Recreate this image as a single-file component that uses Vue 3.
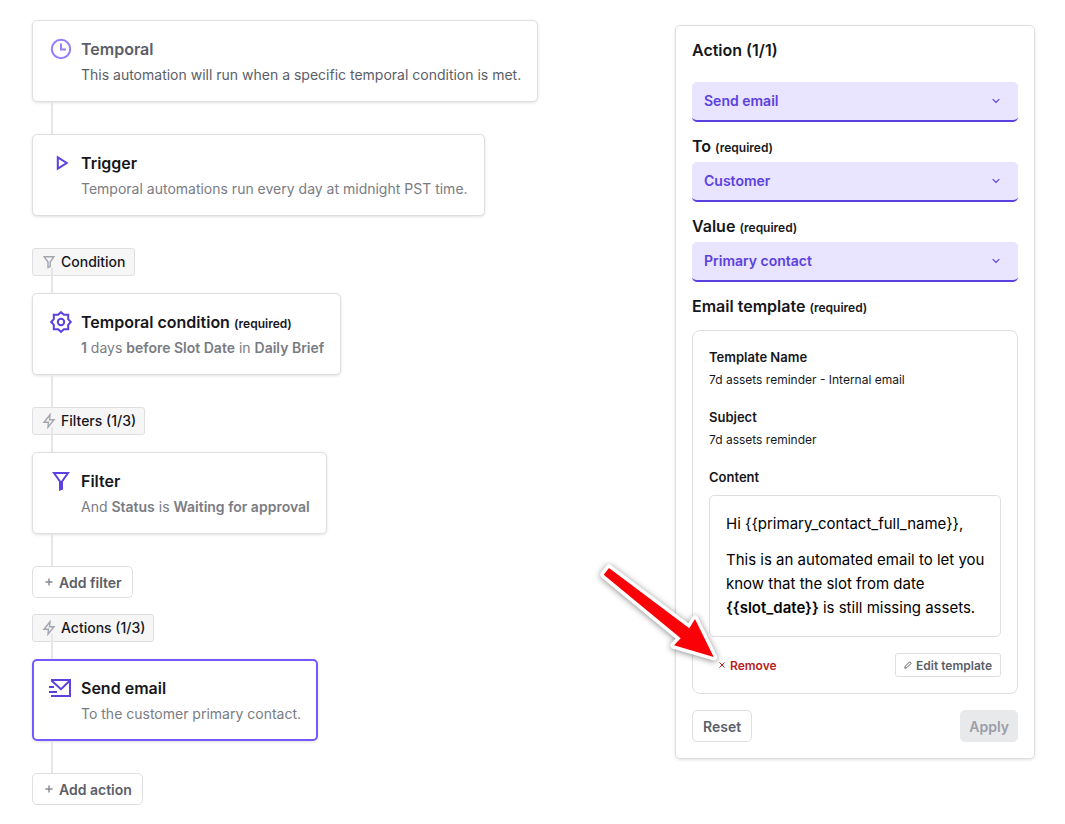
<script setup>
import { ref } from 'vue'

const action = ref('Send email')
const recipient = ref('Customer')
const value = ref('Primary contact')

const greeting = 'Hi {{primary_contact_full_name}},'
const dateVariable = '{{slot_date}}'
</script>

<template>
  <div class="page">
    <main class="flow">
      <section class="card intro">
        <svg class="icon light" viewBox="0 0 24 24"><circle cx="12" cy="12" r="9.2" /><path d="M12 6.6v6h5" /></svg>
        <div class="card-text">
          <h2>Temporal</h2>
          <p>This automation will run when a specific temporal condition is met.</p>
        </div>
      </section>
      <div class="line"></div>

      <section class="card">
        <svg class="icon" viewBox="0 0 24 24"><path d="M8.800 6.400v11.200l8.900-5.600z" /></svg>
        <div class="card-text">
          <h2>Trigger</h2>
          <p>Temporal automations run every day at midnight PST time.</p>
        </div>
      </section>

      <div class="pill spaced">
        <svg class="small-icon" viewBox="0 0 16 16"><path d="M3.2 2.8h9.6L9.2 8v4.6L7 13.5V8z" /></svg>
        <span>Condition</span>
      </div>
      <div class="line short"></div>

      <section class="card">
        <svg class="icon" viewBox="0 0 24 24">
          <path d="M12 2.2l2.9 2.6h4.3v4.3l2.6 2.9-2.6 2.9v4.3h-4.3L12 21.8l-2.9-2.6H4.8v-4.3L2.2 12l2.6-2.9V4.8h4.3z" />
          <circle cx="12" cy="12" r="3.2" />
        </svg>
        <div class="card-text">
          <h2>Temporal condition <small>(required)</small></h2>
          <p><b>1</b> days <b>before Slot Date</b> in <b>Daily Brief</b></p>
        </div>
      </section>
      <div class="line"></div>

      <div class="pill">
        <svg class="small-icon" viewBox="0 0 16 16"><path d="M9 1.8L3 9.2h4.4L7 14.2l6-7.4H8.5z" /></svg>
        <span>Filters (1/3)</span>
      </div>
      <div class="line short"></div>

      <section class="card">
        <svg class="icon" viewBox="0 0 24 24"><path d="M5 4h14l-6 8.5v7.2l-2 .8v-8z" /></svg>
        <div class="card-text">
          <h2>Filter</h2>
          <p>And <b>Status</b> is <b>Waiting for approval</b></p>
        </div>
      </section>
      <div class="line"></div>

      <button type="button" class="button">
        <svg class="plus" viewBox="0 0 12 12"><path d="M6 2.5v7M2.5 6h7" /></svg>
        Add filter
      </button>

      <div class="pill near">
        <svg class="small-icon" viewBox="0 0 16 16"><path d="M9 1.8L3 9.2h4.4L7 14.2l6-7.4H8.5z" /></svg>
        <span>Actions (1/3)</span>
      </div>
      <div class="line short"></div>

      <section class="card selected">
        <svg class="icon" viewBox="0 0 24 24">
          <path d="M2 4h19v16H2M2.5 4.500l9.500 8.700 9-8.700M0 11h5M0 16h8" />
        </svg>
        <div class="card-text">
          <h2>Send email</h2>
          <p>To the customer primary contact.</p>
        </div>
      </section>
      <div class="line"></div>

      <button type="button" class="button">
        <svg class="plus" viewBox="0 0 12 12"><path d="M6 2.5v7M2.5 6h7" /></svg>
        Add action
      </button>
    </main>

    <aside class="panel">
      <h2 id="action-title">Action (1/1)</h2>
      <div class="select first">
        <select v-model="action" aria-labelledby="action-title"><option>Send email</option></select>
        <svg viewBox="0 0 10 10"><path d="M1.700 3.200L5 6.500l3.300-3.300" /></svg>
      </div>

      <label for="recipient">To <small>(required)</small></label>
      <div class="select">
        <select id="recipient" v-model="recipient"><option>Customer</option></select>
        <svg viewBox="0 0 10 10"><path d="M1.700 3.200L5 6.500l3.300-3.300" /></svg>
      </div>

      <label for="value">Value <small>(required)</small></label>
      <div class="select">
        <select id="value" v-model="value"><option>Primary contact</option></select>
        <svg viewBox="0 0 10 10"><path d="M1.700 3.200L5 6.500l3.300-3.300" /></svg>
      </div>

      <h2 class="template-title">Email template <small>(required)</small></h2>
      <section class="template">
        <h3>Template Name</h3>
        <p class="detail">7d assets reminder - Internal email</p>
        <h3>Subject</h3>
        <p class="detail">7d assets reminder</p>
        <h3>Content</h3>
        <div class="content">
          <p>{{ greeting }}</p>
          <p>
            This is an automated email to let you<br />
            know that the slot from date<br />
            <b>{{ dateVariable }}</b> is still missing assets.
          </p>
        </div>
        <div class="row">
          <button type="button" class="mini remove">
            <svg viewBox="0 0 8 8"><path d="M1.500 1.500l5 5M6.500 1.500l-5 5" /></svg>
            Remove
            <svg class="arrow" viewBox="0 0 130 110" aria-hidden="true">
              <path d="M15 10l-5.3 6.700 77 63.600-6.700 7 39.700 11.700-18.700-38-5.700 9.300z" />
              <path class="fill" d="M15 10l-5.3 6.700 77 63.600-6.700 7 39.700 11.700-18.700-38-5.700 9.300z" />
            </svg>
          </button>
          <button type="button" class="mini">
            <svg viewBox="0 0 8 8"><path d="M.8 7.200l.5-2L5.700.8l1.500 1.500-4.400 4.400z" /></svg>
            Edit template
          </button>
        </div>
      </section>

      <div class="row">
        <button type="button" class="button">Reset</button>
        <button type="button" class="button" disabled>Apply</button>
      </div>
    </aside>
  </div>
</template>

<style>
body {
  background: #fff;
}
</style>

<style scoped>
.page {
  box-sizing: border-box;
  display: flex;
  align-items: flex-start;
  justify-content: space-between;
  gap: 32px;
  padding: 20px 30px 18px 32px;
  color: #16171c;
  font-family: Inter, "Liberation Sans", sans-serif;
  font-size: 14px;
  line-height: 20px;
}
h2,
h3,
p {
  margin: 0;
}
h2,
label {
  display: block;
  font-size: 16px;
  font-weight: 600;
  line-height: 24px;
}
small {
  font-size: 12px;
  line-height: 12px;
}
b {
  font-weight: 600;
}
svg {
  display: block;
  flex: none;
  fill: none;
  stroke: currentColor;
}
.flow {
  display: flex;
  flex-direction: column;
  align-items: flex-start;
}
.card {
  display: flex;
  gap: 8px;
  padding: 16px;
  border: 1px solid #dedfe2;
  border-radius: 5px;
  background: #fff;
  box-shadow: 0 1px 3px rgba(20, 20, 30, 0.12);
}
.card p {
  margin-top: 4px;
  color: #7a7c83;
}
.intro h2,
.intro p {
  color: #5b5e68;
}
.selected {
  padding: 15px;
  border: 2px solid #7559ff;
}
.icon {
  width: 24px;
  height: 24px;
  color: #5b41e0;
  stroke-width: 2;
}
.light {
  color: #917fff;
}
.line {
  width: 2px;
  height: 32px;
  margin-left: 19px;
  background: #e6e6e8;
}
.short {
  position: relative;
  height: 25px;
  margin-top: -8px;
}
.pill {
  display: flex;
  align-items: center;
  gap: 4px;
  padding: 3px 8px;
  border: 1px solid #dedfe2;
  border-radius: 3px;
  background: #f6f6f7;
  font-weight: 500;
}
.spaced {
  margin-top: 32px;
}
.near {
  margin-top: 16px;
}
.small-icon {
  width: 16px;
  height: 16px;
  color: #a3a5ae;
  stroke-width: 1.4;
}
button {
  font-family: inherit;
  cursor: pointer;
}
.button {
  display: flex;
  align-items: center;
  gap: 4px;
  height: 32px;
  padding: 0 10px;
  border: 1px solid #dedfe2;
  border-radius: 5px;
  background: #fff;
  color: #5b5e68;
  font-size: 14px;
  font-weight: 600;
}
.button:disabled {
  padding: 0 8px;
  border-color: #e8e9eb;
  background: #e8e9eb;
  color: #9b9ea8;
  cursor: default;
}
.plus {
  width: 12px;
  height: 12px;
  color: #858891;
  stroke-width: 1.4;
}
.panel {
  box-sizing: border-box;
  flex: none;
  width: 360px;
  margin-top: 5px;
  padding: 12px 16px 16px;
  border: 1px solid #dedfe2;
  border-radius: 5px;
  box-shadow: 0 1px 3px rgba(20, 20, 30, 0.12);
}
.select {
  display: grid;
  align-items: center;
  margin-bottom: 12px;
}
.first {
  margin-top: 20px;
}
label {
  margin-bottom: 4px;
}
.select > * {
  grid-area: 1 / 1;
}
select {
  box-sizing: border-box;
  width: 100%;
  height: 40px;
  padding: 0 12px;
  appearance: none;
  border: 0;
  border-bottom: 2px solid #5b41e0;
  border-radius: 5px;
  background: #e9e4ff;
  color: #5b41e0;
  font: inherit;
  font-weight: 600;
}
.select svg {
  justify-self: end;
  width: 10px;
  height: 10px;
  margin: 0 17px 2px 0;
  color: #5b41e0;
  stroke-width: 1.2;
  pointer-events: none;
}
.template-title {
  margin-bottom: 12px;
}
.template {
  margin-bottom: 16px;
  padding: 16px;
  border: 1px solid #dedfe2;
  border-radius: 8px;
}
h3 {
  font-size: 13px;
  font-weight: 600;
  line-height: 20px;
}
.detail {
  margin: 3px 0 17px;
  font-size: 12px;
}
.content {
  margin: 8px 0 16px;
  padding: 16px 0 16px 16px;
  border: 1px solid #dedfe2;
  border-radius: 5px;
  color: #000;
  font-size: 15px;
  line-height: 24px;
}
.content p + p {
  margin-top: 12px;
}
.row {
  display: flex;
  justify-content: space-between;
}
.mini {
  display: flex;
  align-items: center;
  gap: 4px;
  height: 24px;
  padding: 0 8px;
  border: 1px solid #dedfe2;
  border-radius: 3px;
  background: #fff;
  color: #5b5e68;
  font-size: 12px;
  font-weight: 600;
}
.mini svg {
  width: 8px;
  height: 8px;
}
.remove {
  position: relative;
  border-color: transparent;
  background: none;
  color: #b81c1c;
}
.remove .arrow {
  position: absolute;
  top: -96px;
  left: -116px;
  width: 130px;
  height: 110px;
  overflow: visible;
  stroke: #fff;
  stroke-width: 7;
  stroke-linejoin: round;
  filter: drop-shadow(0 1px 3px rgba(0, 0, 0, 0.45));
  pointer-events: none;
}
.arrow .fill {
  fill: #fb0007;
  stroke: none;
}
</style>
